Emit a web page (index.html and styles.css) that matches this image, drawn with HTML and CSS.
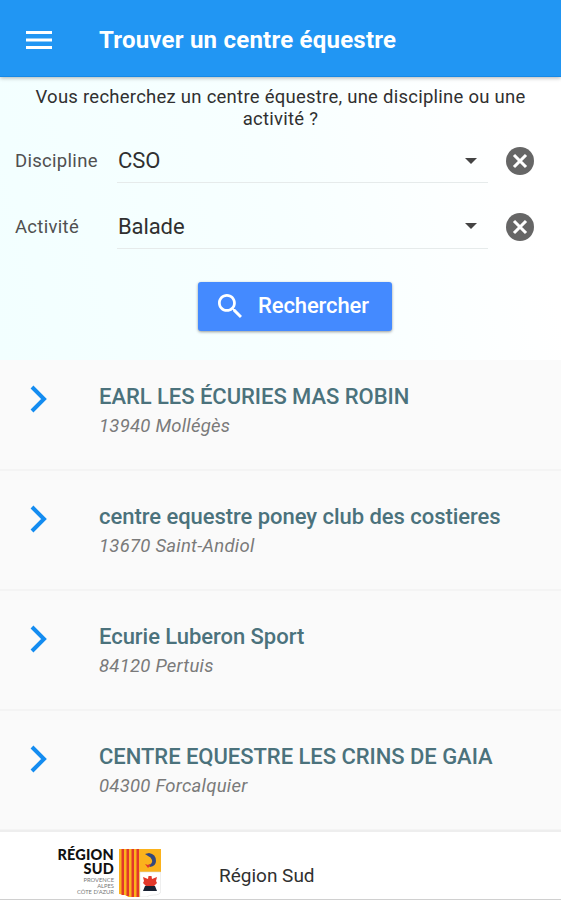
FILE: index.html
```html
<!DOCTYPE html>
<html lang="fr">
<head>
  <meta charset="UTF-8"/>
  <meta name="viewport" content="width=device-width, initial-scale=1.0"/>
  <title>Trouver un centre équestre</title>
  <link rel="stylesheet" href="styles.css">
</head>
<body>
  <header class="toolbar">
    <svg class="menu-icon" viewBox="0 0 26 18">
      <path d="M0 0h26v3H0zM0 7.5h26v3H0zM0 15h26v3H0z"/>
    </svg>
    <h1>Trouver un centre équestre</h1>
  </header>

  <!-- Recherche -->
  <section class="search">
    <p class="intro">Vous recherchez un centre équestre, une discipline ou une<br>activité ?</p>
    <div class="field">
      <span class="label">Discipline</span>
      <div class="select"><span>CSO</span><i class="arrow"></i></div>
      <svg class="clear" viewBox="2 2 20 20"><circle cx="12" cy="12" r="10"/><path d="M7.700 7.700l8.600 8.600M16.300 7.700l-8.600 8.600"/></svg>
    </div>
    <div class="field">
      <span class="label">Activité</span>
      <div class="select"><span>Balade</span><i class="arrow"></i></div>
      <svg class="clear" viewBox="2 2 20 20"><circle cx="12" cy="12" r="10"/><path d="M7.700 7.700l8.600 8.600M16.300 7.700l-8.600 8.600"/></svg>
    </div>
    <button class="btn">
      <svg viewBox="3 3 17.5 17.5"><path d="M15.5 14h-.79l-.28-.27C15.41 12.59 16 11.11 16 9.5 16 5.91 13.09 3 9.5 3S3 5.91 3 9.5 5.91 16 9.5 16c1.61 0 3.09-.59 4.23-1.57l.27.28v.79l5 4.99L20.49 19l-4.99-5zm-6 0C7.01 14 5 11.99 5 9.5S7.01 5 9.5 5 14 7.01 14 9.5 11.99 14 9.5 14z"/></svg>
      <span>Rechercher</span>
    </button>
  </section>

  <!-- Résultats -->
  <ul class="results">
    <li class="item">
      <svg class="chevron" viewBox="0 0 18 28"><path d="M2 2l12 12L2 26"/></svg>
      <div class="infos">
        <h2>EARL LES ÉCURIES MAS ROBIN</h2>
        <p>13940 Mollégès</p>
      </div>
    </li>
    <li class="item">
      <svg class="chevron" viewBox="0 0 18 28"><path d="M2 2l12 12L2 26"/></svg>
      <div class="infos">
        <h2>centre equestre poney club des costieres</h2>
        <p>13670 Saint-Andiol</p>
      </div>
    </li>
    <li class="item">
      <svg class="chevron" viewBox="0 0 18 28"><path d="M2 2l12 12L2 26"/></svg>
      <div class="infos">
        <h2>Ecurie Luberon Sport</h2>
        <p>84120 Pertuis</p>
      </div>
    </li>
    <li class="item">
      <svg class="chevron" viewBox="0 0 18 28"><path d="M2 2l12 12L2 26"/></svg>
      <div class="infos">
        <h2>CENTRE EQUESTRE LES CRINS DE GAIA</h2>
        <p>04300 Forcalquier</p>
      </div>
    </li>
  </ul>

  <footer class="partner">
    <div class="logo">
      <div class="logo-text">
        <strong>RÉGION</strong>
        <strong>SUD</strong>
        <small>PROVENCE</small>
        <small>ALPES</small>
        <small>CÔTE D'AZUR</small>
      </div>
      <svg class="blason" viewBox="0 0 42 48">
        <path fill="#fbb21c" d="M0 0h42v23H21v25H9q-1-2-9-3z"/>
        <path fill="#e2382b" d="M2.500 0h2.500v46H2.500zM7.500 0H10v47H7.500zM12.500 0H15v48h-2.500zM17.500 0H20v48h-2.500z"/>
        <path fill="#fff" stroke="#ddd" stroke-width=".6" d="M21 23h20.700v20q-1 3-7 3-5 0-7 2h-6.700z"/>
        <path fill="#35477d" d="M26 5l4-1q7 1 7 8 0 5-6 6l-2-2q5-1 4-5-1-3-4-4z"/>
        <path fill="#e2382b" d="M26 15l3 1 3-1-2 3-1 1zM24 28l5 2 .5-3h3l.5 3 5-2-1 4 1 2-3 3h-8l-3-3 1-2z"/>
        <path fill="#182031" d="M26 37h10l2 5H24z"/>
      </svg>
    </div>
    <span class="partner-name">Région Sud</span>
  </footer>
</body>
</html>
```
FILE: styles.css
```css
* { box-sizing: border-box; }
body { margin: 0; height: 900px; overflow: hidden; background: #fafafa; font-family: Roboto, "Liberation Sans", sans-serif; color: #303030; }
h1, h2, p, ul { margin: 0; padding: 0; }
svg { display: block; flex: none; }

.toolbar { position: relative; display: flex; align-items: center; height: 77px; padding: 3px 26px 0; background: #2196f3; border-bottom: 1px solid #1689e6; box-shadow: 0 1px 4px rgba(0,0,0,0.3); }
.toolbar h1 { margin-left: 47px; font-size: 24px; line-height: 32px; font-weight: 700; letter-spacing: 0.22px; color: #fff; white-space: nowrap; }
.menu-icon { width: 26px; height: 18px; fill: #fff; }

.search { height: 283px; padding-top: 9px; background: linear-gradient(75deg, #f2ffff 0%, #f7ffff 50%, #fff 90%); }
.intro { height: 43px; font-size: 18.5px; line-height: 22px; letter-spacing: 0.25px; text-align: center; white-space: nowrap; }
.field { display: flex; align-items: center; height: 64px; padding-left: 15px; }
.field + .field { height: 67px; }
.label { width: 102px; font-size: 18.5px; letter-spacing: 0.3px; color: #505050; }
.select { display: flex; align-items: center; justify-content: space-between; width: 371px; height: 44px; padding: 0 11px 0 1px; border-bottom: 1px solid #e6ebeb; font-size: 22px; letter-spacing: -0.1px; }
.arrow { border: 6px solid transparent; border-top-color: #444; border-bottom: 0; }
.clear { width: 28px; height: 28px; margin-left: 18px; fill: #666; stroke: #fff; stroke-width: 2.2; }
.clear circle { stroke: none; }
.btn { display: flex; align-items: center; width: 194px; height: 49px; margin: 22px 0 0 198px; padding: 0 20px 2px; border: none; border-radius: 3px; background: #448aff; color: #fff; font-family: inherit; font-size: 22px; font-weight: 500; box-shadow: 0 1px 3px rgba(0,0,0,0.4); }
.btn svg { width: 24px; height: 24px; margin-right: 16px; fill: #fff; }
.btn span { letter-spacing: -0.1px; }

.results { height: 470px; list-style: none; }
.item { display: flex; height: 120px; padding: 33px 29px 0; border-bottom: 2px solid #f4f4f4; }
.item:first-child { height: 111px; padding-top: 24px; }
.chevron { width: 18px; height: 28px; margin: 1px 0 0 1px; fill: none; stroke: #148cf0; stroke-width: 4; }
.infos { margin-left: 51px; white-space: nowrap; }
.infos h2 { font-size: 22px; line-height: 26px; font-weight: 500; letter-spacing: -0.04px; color: #4b727c; }
.infos p { margin-top: 4px; font-size: 18.5px; line-height: 24px; font-style: italic; letter-spacing: 0.24px; color: #7a7a7a; }

.partner { display: flex; height: 70px; padding: 16px 0 0 57px; background: #fff; border-top: 2px solid #eee; border-bottom: 1px solid #d0d0d0; }
.logo { display: flex; gap: 5px; width: 104px; }
.logo-text { display: flex; flex-direction: column; align-items: flex-end; width: 57px; }
.logo-text strong { height: 14px; font-family: Lato, sans-serif; font-size: 14.5px; line-height: 14px; font-weight: 900; letter-spacing: 0.2px; color: #111; }
.logo-text small { height: 6px; font-family: Lato, sans-serif; font-size: 5.8px; line-height: 6px; color: #777; }
.logo-text strong + small { margin-top: 1px; }
.blason { width: 42px; height: 48px; margin-top: 1px; }
.partner-name { margin: 16px 0 0 58px; font-size: 19px; line-height: 24px; }
```
